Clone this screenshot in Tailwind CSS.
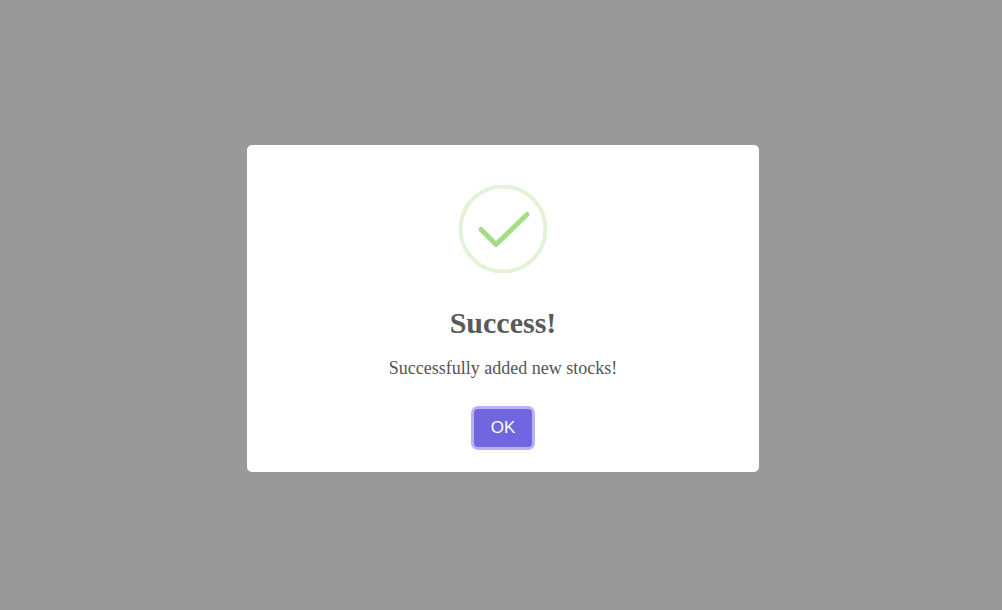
<!DOCTYPE html>
<html lang="en">

<head>
  <meta charset="UTF-8">
  <meta name="viewport" content="width=device-width, initial-scale=1.0">
  <title>Success</title>
  <script src="https://cdn.jsdelivr.net/npm/@tailwindcss/browser@4"></script>
</head>

<body class="bg-[#999999] h-screen flex items-center justify-center font-['Liberation_Serif',serif]">

  <!-- Success modal -->
  <div class="w-[512px] h-[327px] ml-[4px] mt-[7px] bg-white rounded-[5px] flex flex-col items-center pt-[40px]">
    <svg class="w-[88px] h-[88px]" viewBox="0 0 88 88" fill="none">
      <circle cx="44" cy="44" r="42.5" stroke="#e4f3d8" stroke-width="4" />
      <path d="M22 44.500 L37 59.500 L68 29.500" stroke="#a5dc86" stroke-width="5" stroke-linecap="round" stroke-linejoin="round" />
    </svg>
    <h2 class="mt-[30px] text-[30px] leading-[40px] font-bold text-[#595959]">Success!</h2>
    <p class="mt-[11px] text-[18px] leading-[28px] text-[#545454]">Successfully added new stocks!</p>
    <button class="mt-[27px] w-[58px] h-[38px] rounded-[4px] bg-[#7066e0] text-white text-[17px] font-['Liberation_Sans',sans-serif] ring-3 ring-[#b8b3f0]">OK</button>
  </div>

</body>

</html>
